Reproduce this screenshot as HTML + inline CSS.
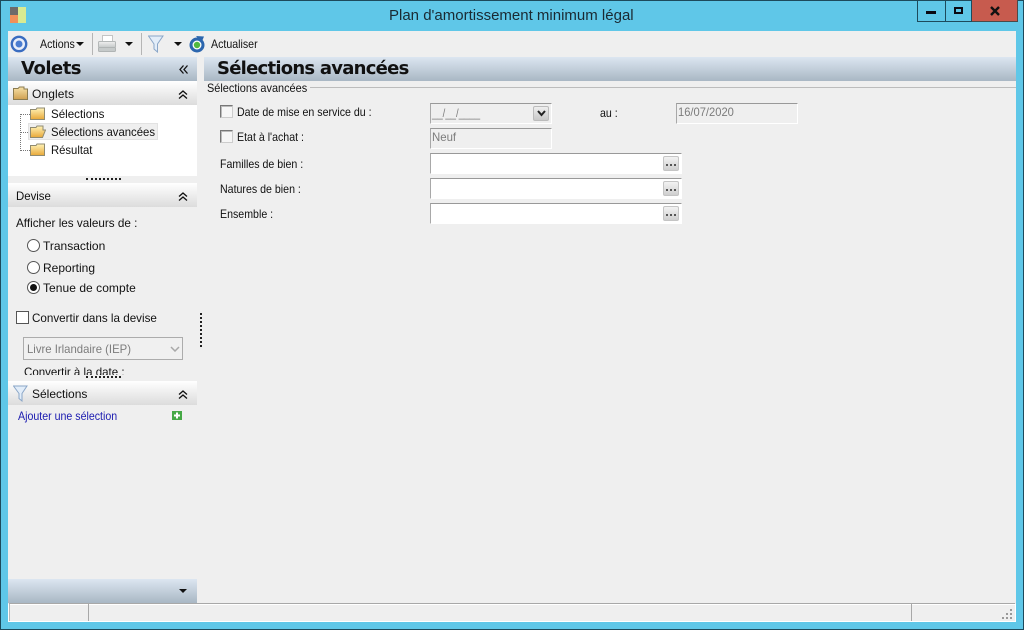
<!DOCTYPE html>
<html><head><meta charset="utf-8">
<style>
html,body{margin:0;padding:0;width:1024px;height:630px;overflow:hidden;background:#5fc7e8}
body{position:relative;font-family:"Liberation Sans",sans-serif;font-size:12px;color:#111}
.a,.t,svg.i{position:absolute}
.t{white-space:nowrap;line-height:14px;transform-origin:0 50%}
.f{transform:scaleX(.885)}
.hd{position:absolute;background:linear-gradient(#dce6f1,#a9b7c4)}
.sec{position:absolute;left:8px;width:189px;height:24px;background:linear-gradient(#fff,#dcdcdc)}
.inp{position:absolute;box-sizing:border-box;border-top:1px solid #999;border-left:1px solid #a8a8a8;border-right:1px solid #fff;border-bottom:1px solid #fff}
.cb{position:absolute;box-sizing:border-box;width:13px;height:13px;background:#f6f6f6;border:1px solid #777;border-right-color:#ccc;border-bottom-color:#ccc;box-shadow:inset 1px 1px 0 #bbb}
.rad{position:absolute;box-sizing:border-box;width:13px;height:13px;border-radius:50%;background:#fff;border:1px solid #555}
.btn{position:absolute;box-sizing:border-box;width:16px;height:15px;background:linear-gradient(#f2f2f2,#cfcfcf);border:1px solid #c4c4c4;border-radius:2px}
.gray{color:#7c7c7c}
.h{font-size:18px;line-height:22px;font-weight:bold;font-family:'DejaVu Sans',sans-serif;letter-spacing:-.75px}
</style></head><body>
<svg width="0" height="0" style="position:absolute"><defs>
<linearGradient id="fo" x1="0" y1="0" x2="0" y2="1"><stop offset="0" stop-color="#fff3b8"/><stop offset="1" stop-color="#e8a838"/></linearGradient>
<linearGradient id="fp" x1="0" y1="0" x2="0" y2="1"><stop offset="0" stop-color="#f7e2a8"/><stop offset="1" stop-color="#cfa050"/></linearGradient>
<linearGradient id="pr" x1="0" y1="0" x2="0" y2="1"><stop offset="0" stop-color="#f0f0f0"/><stop offset="1" stop-color="#c4c8c8"/></linearGradient>
</defs></svg>
<div class="a" style="left:0;top:0;width:1022px;height:628px;border:1px solid #1d4a5c"></div>
<!-- app icon -->
<div class="a" style="left:10px;top:7px;width:8px;height:8px;background:#6d6a6a"></div>
<div class="a" style="left:10px;top:15px;width:8px;height:8px;background:#f0905a"></div>
<div class="a" style="left:18px;top:7px;width:8px;height:16px;background:#d8ea92"></div>
<div class="t" style="left:389px;top:7px;font-size:15px;line-height:17px;color:#1a2a33">Plan d'amortissement minimum légal</div>
<!-- window buttons -->
<div class="a" style="left:917px;top:0;width:27px;height:21px;border:1px solid #1d4a5c;border-top:0"></div>
<div class="a" style="left:945px;top:0;width:26px;height:21px;border:1px solid #1d4a5c;border-top:0;border-left:0"></div>
<div class="a" style="left:972px;top:0;width:45px;height:21px;background:#c75b4e;border:1px solid #4a4a4a;border-top:0;border-left:0"></div>
<div class="a" style="left:926px;top:11px;width:10px;height:3px;background:#0a0a14"></div>
<div class="a" style="left:954px;top:7px;width:5px;height:3px;border:2px solid #0a0a14"></div>
<svg class="i" style="left:990px;top:6px" width="10" height="10"><path d="M1 1L9 9M9 1L1 9" stroke="#111" stroke-width="2.4"/></svg>
<!-- client -->
<div class="a" style="left:8px;top:31px;width:1008px;height:591px;background:#efefef"></div>
<!-- toolbar -->
<svg class="i" style="left:10px;top:35px" width="18" height="18"><circle cx="9" cy="9" r="7.200" fill="#e8eefa" stroke="#3a6cc0" stroke-width="2.400"/><circle cx="9" cy="9" r="3.500" fill="#4a7cd0"/></svg>
<div class="t f" style="left:40px;top:37px">Actions</div>
<svg class="i" style="left:76px;top:42px" width="9" height="5"><path d="M0 0H8L4 4Z" fill="#111"/></svg>
<div class="a" style="left:92px;top:33px;width:1px;height:22px;background:#b5b5b5"></div>
<svg class="i" style="left:98px;top:35px" width="19" height="18"><rect x="4.500" y=".5" width="10" height="6" fill="#fff" stroke="#c4c4c4"/><rect x=".5" y="6.500" width="17" height="6" rx="1" fill="url(#pr)" stroke="#b4b8b8"/><rect x=".5" y="12.500" width="17" height="4" rx="1" fill="#c6caca" stroke="#b0b4b4"/></svg>
<svg class="i" style="left:125px;top:42px" width="9" height="5"><path d="M0 0H8L4 4Z" fill="#111"/></svg>
<div class="a" style="left:141px;top:33px;width:1px;height:22px;background:#b5b5b5"></div>
<svg class="i" style="left:148px;top:35px" width="16" height="18"><path d="M.5 1H15L9.500 9V17L6 14V9Z" fill="#e2edf9" stroke="#8aa6c8"/></svg>
<svg class="i" style="left:174px;top:42px" width="9" height="5"><path d="M0 0H8L4 4Z" fill="#111"/></svg>
<svg class="i" style="left:188px;top:35px" width="18" height="18"><circle cx="9" cy="10" r="6" fill="#fff" stroke="#2c66ae" stroke-width="3"/><circle cx="9" cy="10" r="3.200" fill="#52b840"/><path d="M8 1L16 1.500L13.500 7.500Z" fill="#2c66ae"/></svg>
<div class="t f" style="left:211px;top:37px">Actualiser</div>
<!-- headers -->
<div class="hd" style="left:8px;top:57px;width:189px;height:24px"></div>
<div class="t h" style="left:21px;top:58px;letter-spacing:-.5px">Volets</div>
<svg class="i" style="left:179px;top:65px" width="10" height="9"><path d="M4.500 .5L1 4.500L4.500 8.500M8.500 .5L5 4.500L8.500 8.500" fill="none" stroke="#111" stroke-width="1.300"/></svg>
<div class="hd" style="left:204px;top:57px;width:812px;height:24px"></div>
<div class="t h" style="left:217px;top:58px">Sélections avancées</div>
<!-- Onglets -->
<div class="sec" style="top:81px"></div>
<svg class="i" style="left:13px;top:86px" width="15" height="14"><path d="M.5 2.500H5L6.500 1H11V3H14.500V13.500H.5Z" fill="url(#fp)" stroke="#8a7b50"/></svg>
<div class="t" style="left:32px;top:87px;letter-spacing:.1px">Onglets</div>
<svg class="i" style="left:178px;top:90px" width="10" height="9"><path d="M1 4.500L5 1L9 4.500M1 8.500L5 5L9 8.500" fill="none" stroke="#111" stroke-width="1.300"/></svg>
<div class="a" style="left:8px;top:105px;width:189px;height:71px;background:#fff"></div>
<div class="a" style="left:20px;top:114px;height:37px;border-left:1px dotted #777"></div>
<div class="a" style="left:20px;top:114px;width:10px;border-top:1px dotted #777"></div>
<div class="a" style="left:20px;top:132px;width:10px;border-top:1px dotted #777"></div>
<div class="a" style="left:20px;top:150px;width:10px;border-top:1px dotted #777"></div>
<svg class="i" style="left:30px;top:107px" width="16" height="13"><path d="M.5 2.500H6L7 1H14.500V12.500H.5Z" fill="url(#fo)" stroke="#8f8a70"/></svg>
<div class="a" style="left:28px;top:123px;width:130px;height:17px;background:#efefef;border:1px solid #e2e2e2;box-sizing:border-box"></div>
<svg class="i" style="left:30px;top:125px" width="16" height="13"><path d="M.5 12.500V2.500H6L7 1H13V5H15.500L12.500 12.500Z" fill="url(#fo)" stroke="#8f8a70"/></svg>
<svg class="i" style="left:30px;top:143px" width="16" height="13"><path d="M.5 2.500H6L7 1H14.500V12.500H.5Z" fill="url(#fo)" stroke="#8f8a70"/></svg>
<div class="t" style="left:51px;top:107px;transform:scaleX(.965)">Sélections</div>
<div class="t" style="left:51px;top:125px;transform:scaleX(.945)">Sélections avancées</div>
<div class="t" style="left:51px;top:143px;transform:scaleX(.94)">Résultat</div>
<div class="a" style="left:86px;top:178px;width:35px;border-top:2px dotted #222"></div>
<!-- Devise -->
<div class="sec" style="top:183px"></div>
<div class="t" style="left:16px;top:189px;transform:scaleX(.95)">Devise</div>
<svg class="i" style="left:178px;top:192px" width="10" height="9"><path d="M1 4.500L5 1L9 4.500M1 8.500L5 5L9 8.500" fill="none" stroke="#111" stroke-width="1.300"/></svg>
<div class="t" style="left:16px;top:216px;transform:scaleX(.975)">Afficher les valeurs de :</div>
<div class="rad" style="left:27px;top:239px"></div>
<div class="t" style="left:43px;top:239px">Transaction</div>
<div class="rad" style="left:27px;top:261px"></div>
<div class="t" style="left:43px;top:261px">Reporting</div>
<div class="rad" style="left:27px;top:281px"></div>
<div class="a" style="left:30px;top:284px;width:7px;height:7px;border-radius:50%;background:#111"></div>
<div class="t" style="left:43px;top:281px;letter-spacing:.05px">Tenue de compte</div>
<div class="a" style="left:16px;top:311px;width:13px;height:13px;box-sizing:border-box;background:#fff;border:1px solid #555"></div>
<div class="t" style="left:32px;top:311px;transform:scaleX(.97)">Convertir dans la devise</div>
<div class="a" style="left:200px;top:313px;height:34px;border-left:2px dotted #222"></div>
<div class="a" style="left:23px;top:337px;width:160px;height:23px;box-sizing:border-box;background:#f0f0f0;border:1px solid #acacac"></div>
<div class="t gray" style="left:27px;top:342px;transform:scaleX(.945)">Livre Irlandaire (IEP)</div>
<svg class="i" style="left:170px;top:346px" width="10" height="6"><path d="M1 1L5 5L9 1" fill="none" stroke="#a8a8a8" stroke-width="1.500"/></svg>
<div class="a" style="left:24px;top:365px;width:120px;height:10px;overflow:hidden"><div class="t" style="left:0;top:0;transform:scaleX(.96)">Convertir à la date :</div></div>
<div class="a" style="left:86px;top:376px;width:35px;border-top:2px dotted #222"></div>
<!-- Selections -->
<div class="sec" style="top:381px"></div>
<svg class="i" style="left:13px;top:385px" width="15" height="17"><path d="M.5 1H14L9 8.500V16L6 13.500V8.500Z" fill="#e2edf9" stroke="#8aa6c8"/></svg>
<div class="t" style="left:32px;top:387px">Sélections</div>
<svg class="i" style="left:178px;top:390px" width="10" height="9"><path d="M1 4.500L5 1L9 4.500M1 8.500L5 5L9 8.500" fill="none" stroke="#111" stroke-width="1.300"/></svg>
<div class="t f" style="left:18px;top:409px;color:#1a1ab0">Ajouter une sélection</div>
<svg class="i" style="left:172px;top:411px" width="10" height="10"><rect width="10" height="9" fill="#45a845"/><path d="M5 1.500V7.500M2 4.500H8" stroke="#fff" stroke-width="2"/></svg>
<!-- bottom bar -->
<div class="hd" style="left:8px;top:579px;width:189px;height:24px"></div>
<svg class="i" style="left:179px;top:589px" width="9" height="5"><path d="M0 0H8L4 4Z" fill="#111"/></svg>
<!-- group -->
<div class="t" style="left:207px;top:81px;transform:scaleX(.91)">Sélections avancées</div>
<div class="a" style="left:310px;top:87px;width:706px;height:1px;background:#bcbcbc"></div>
<div class="cb" style="left:220px;top:105px"></div>
<div class="t f" style="left:237px;top:105px">Date de mise en service du :</div>
<div class="cb" style="left:220px;top:130px"></div>
<div class="t f" style="left:237px;top:130px">Etat à l'achat :</div>
<div class="t f" style="left:220px;top:157px">Familles de bien :</div>
<div class="t f" style="left:220px;top:182px">Natures de bien :</div>
<div class="t f" style="left:220px;top:207px">Ensemble :</div>
<div class="inp" style="left:430px;top:103px;width:122px;height:21px"></div>
<div class="t gray" style="left:432px;top:106px;transform:scaleX(.8)">__/__/____</div>
<div class="a" style="left:533px;top:106px;width:16px;height:15px;box-sizing:border-box;background:linear-gradient(#eee,#c8c8c8);border:1px solid #bbb;border-radius:2px"></div>
<svg class="i" style="left:537px;top:110px" width="9" height="7"><path d="M1 1L4.500 5L8 1" fill="none" stroke="#222" stroke-width="2"/></svg>
<div class="t f" style="left:600px;top:106px">au :</div>
<div class="inp" style="left:676px;top:103px;width:122px;height:21px"></div>
<div class="t gray" style="left:678px;top:105px;transform:scaleX(.93)">16/07/2020</div>
<div class="inp" style="left:430px;top:128px;width:122px;height:21px"></div>
<div class="t gray" style="left:432px;top:130px;transform:scaleX(.95)">Neuf</div>
<div class="inp" style="left:430px;top:153px;width:252px;height:21px;background:#fff"></div>
<div class="btn" style="left:663px;top:156px"></div>
<svg class="i" style="left:666px;top:164px" width="10" height="2" fill="#555"><rect x="0" width="2" height="2"/><rect x="4" width="2" height="2"/><rect x="8" width="2" height="2"/></svg>
<div class="inp" style="left:430px;top:178px;width:252px;height:21px;background:#fff"></div>
<div class="btn" style="left:663px;top:181px"></div>
<svg class="i" style="left:666px;top:189px" width="10" height="2" fill="#555"><rect x="0" width="2" height="2"/><rect x="4" width="2" height="2"/><rect x="8" width="2" height="2"/></svg>
<div class="inp" style="left:430px;top:203px;width:252px;height:21px;background:#fff"></div>
<div class="btn" style="left:663px;top:206px"></div>
<svg class="i" style="left:666px;top:214px" width="10" height="2" fill="#555"><rect x="0" width="2" height="2"/><rect x="4" width="2" height="2"/><rect x="8" width="2" height="2"/></svg>
<!-- status -->
<div class="a" style="left:9px;top:603px;width:1006px;height:1px;background:#a8a8a8"></div>
<div class="a" style="left:8px;top:604px;width:1008px;height:1px;background:#fff"></div>
<div class="a" style="left:8px;top:604px;width:1px;height:18px;background:#fff"></div>
<div class="a" style="left:9px;top:604px;width:1px;height:17px;background:#b8b8b8"></div>
<div class="a" style="left:1015px;top:604px;width:1px;height:18px;background:#fff"></div>
<div class="a" style="left:8px;top:621px;width:1008px;height:1px;background:#fff"></div>
<div class="a" style="left:88px;top:604px;width:1px;height:17px;background:#a8a8a8"></div>
<div class="a" style="left:911px;top:604px;width:1px;height:17px;background:#a8a8a8"></div>
<svg class="i" style="left:1001px;top:608px" width="12" height="12" fill="#999"><rect x="9" y="1" width="2" height="2"/><rect x="5" y="5" width="2" height="2"/><rect x="9" y="5" width="2" height="2"/><rect x="1" y="9" width="2" height="2"/><rect x="5" y="9" width="2" height="2"/><rect x="9" y="9" width="2" height="2"/></svg>
</body></html>
